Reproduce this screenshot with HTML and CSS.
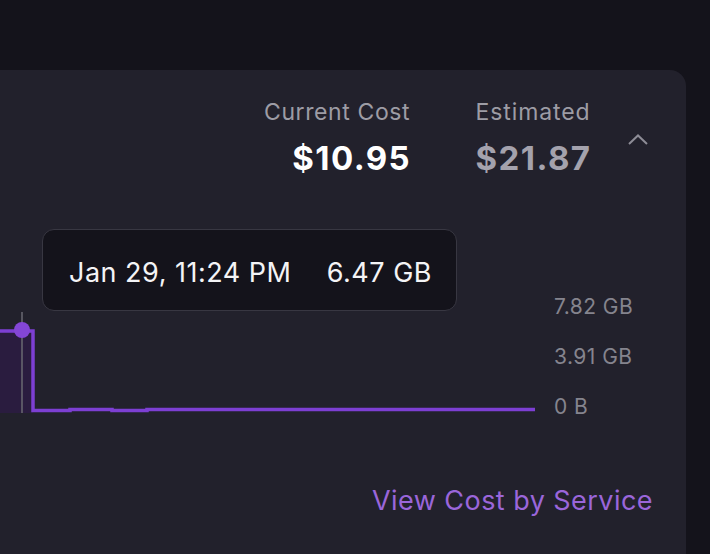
FILE: index.html
```html
<!DOCTYPE html>
<html lang="en">
<head>
<meta charset="utf-8">
<title>Usage</title>
<link rel="stylesheet" href="styles.css">
</head>
<body>
<main class="page">
  <section class="card">
    <header class="card-head">
      <div class="stat">
        <span class="stat-label">Current Cost</span>
        <span class="stat-value">$10.95</span>
      </div>
      <div class="stat stat-muted">
        <span class="stat-label">Estimated</span>
        <span class="stat-value">$21.87</span>
      </div>
      <button class="toggle" aria-label="Collapse">
        <svg width="20" height="11" viewBox="0 0 20 11"><path d="M1 10 L10 1.5 L19 10" fill="none" stroke="#8d8c96" stroke-width="2"/></svg>
      </button>
    </header>
    <div class="chart">
      <div class="plot">
        <svg class="plot-svg" viewBox="0 0 575 200" width="575" height="200">
          <rect x="0" y="116" width="73" height="82" fill="#2a1c3f"/>
          <line x1="62" y1="97" x2="62" y2="198" stroke="#6a6972" stroke-width="1.5"/>
          <path d="M0 116 H73 V195.5 H110 V194.5 H152 V195.5 H187 V194.5 H575" fill="none" stroke="#7d3fd3" stroke-width="3.5"/>
          <circle cx="62" cy="115" r="8" fill="#8446d6"/>
        </svg>
        <div class="tooltip">
          <span>Jan 29, 11:24 PM</span>
          <span>6.47 GB</span>
        </div>
      </div>
      <div class="axis">
        <span>7.82 GB</span>
        <span>3.91 GB</span>
        <span>0 B</span>
      </div>
    </div>
    <footer class="card-foot">
      <a class="link" href="#">View Cost by Service</a>
    </footer>
  </section>
</main>
</body>
</html>
```
FILE: styles.css
```css
* { box-sizing: border-box; }
html, body { margin: 0; padding: 0; }
body {
  background: #14131b;
  font-family: Inter, "Noto Sans", sans-serif;
  overflow: hidden;
  width: 710px;
  height: 554px;
}
.page {
  padding: 70px 24px 0 0;
}
.card {
  margin-left: -40px;
  width: 726px;
  height: 484px;
  background: #22212c;
  border-radius: 16px 16px 0 0;
  padding-right: 33px;
}
.card-head {
  display: flex;
  justify-content: flex-end;
  align-items: center;
  padding-top: 29px;
}
.stat {
  display: flex;
  flex-direction: column;
  align-items: flex-end;
  margin-left: 66px;
  margin-right: -0.6px;
}
.stat-label {
  font-size: 23px;
  line-height: 26px;
  letter-spacing: 0.6px;
  color: #9d9ca5;
}
.stat-value {
  margin-top: 14px;
  font-size: 33px;
  line-height: 38px;
  font-weight: 700;
  letter-spacing: 1.4px;
  margin-right: -0.8px;
  color: #ffffff;
}
.stat-muted .stat-label { letter-spacing: 0.9px; }
.stat-muted .stat-value { color: #a4a2ad; }
.toggle {
  margin-left: 38px;
  margin-right: 5px;
  padding: 0;
  border: 0;
  background: none;
  display: flex;
  margin-top: 2px;
}
.chart {
  display: flex;
  gap: 19px;
  margin-top: 38px;
  padding-right: 19px;
}
.plot {
  position: relative;
  flex: 1;
  height: 200px;
}
.plot-svg { display: block; }
.tooltip {
  position: absolute;
  left: 82px;
  top: 14px;
  height: 82px;
  width: 415px;
  display: flex;
  align-items: center;
  justify-content: space-between;
  padding: 4px 24px 0 26px;
  background: #14131b;
  border: 1.5px solid #383742;
  border-radius: 12px;
  color: #f4f4f6;
  font-size: 27px;
  letter-spacing: 0.5px;
}
.axis {
  width: 80px;
  display: flex;
  flex-direction: column;
  gap: 26px;
  padding-top: 80px;
  font-size: 21px;
  line-height: 24px;
  letter-spacing: 0.45px;
  color: #85848e;
}
.card-foot {
  display: flex;
  justify-content: flex-end;
  margin-top: 67px;
}
.link {
  font-size: 27px;
  line-height: 30px;
  letter-spacing: 0.45px;
  color: #9a66da;
  text-decoration: none;
}
```
